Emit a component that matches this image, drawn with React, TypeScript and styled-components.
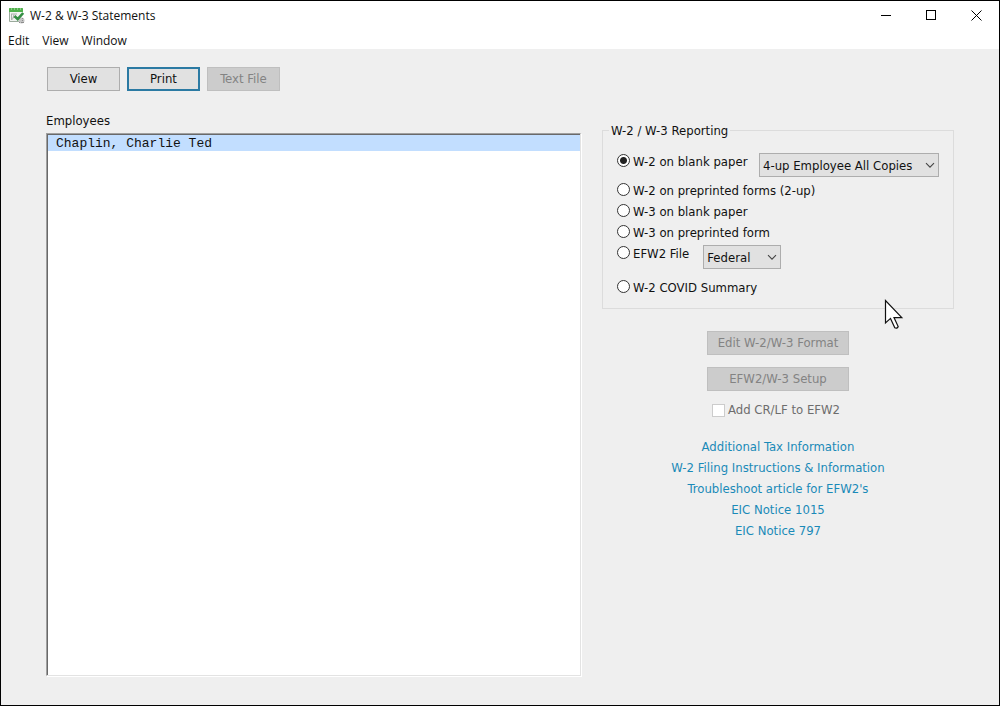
import React, { useState } from "react";
import styled, { createGlobalStyle } from "styled-components";

const uiFont = `Tahoma, "DejaVu Sans Condensed", "Noto Sans", sans-serif`;
const titleFont = `"Segoe UI", "Open Sans", "Noto Sans", sans-serif`;
const monoFont = `"Liberation Mono", "Courier New", monospace`;

const GlobalStyle = createGlobalStyle`
  *, *::before, *::after { box-sizing: border-box; }
  body { margin: 0; background: #efefef; color: #111; font: 13px/16px ${uiFont}; }
  button, select, input { font: inherit; color: inherit; margin: 0; }
`;

const Window = styled.div`
  position: relative;
  display: flex;
  flex-direction: column;
  min-height: 100vh;
  border: 1px solid #000;
  background: #efefef;
`;

const TitleBar = styled.header`
  display: flex;
  align-items: center;
  height: 29px;
  padding-left: 8px;
  background: #fff;
  font: 12px/16px ${titleFont};
`;

const Title = styled.h1`
  flex: 1;
  margin: 0 0 0 5px;
  font: inherit;
`;

const CaptionButton = styled.button`
  display: grid;
  place-items: center;
  width: 45px;
  height: 29px;
  padding: 0;
  border: 0;
  background: transparent;
`;

const MenuBar = styled.nav`
  display: flex;
  gap: 13px;
  height: 19px;
  padding-left: 7px;
  background: #fff;
`;

const MenuButton = styled.button`
  height: 19px;
  padding: 2px 0 0;
  border: 0;
  background: transparent;
  font: 12px/17px ${titleFont};
`;

const Content = styled.main`
  flex: 1;
  display: flex;
  flex-direction: column;
  padding: 18px 45px 29px;
`;

const Toolbar = styled.div`
  display: flex;
  gap: 7px;
  padding-left: 1px;
`;

const PushButton = styled.button<{ $primary?: boolean; $wide?: boolean }>`
  width: ${(p) => (p.$wide ? 142 : 73)}px;
  height: 24px;
  padding: 0;
  border: ${(p) => (p.$primary ? "2px solid #2b7aa3" : "1px solid #adadad")};
  background: #e1e1e1;
  &:disabled {
    border-color: #bfbfbf;
    background: #cccccc;
    color: #838383;
  }
`;

const Columns = styled.div`
  flex: 1;
  display: grid;
  grid-template-columns: minmax(0, 535fr) minmax(352px, 352fr);
  gap: 21px;
  margin-top: 22px;
`;

const ListPanel = styled.section`
  display: flex;
  flex-direction: column;
`;

const ListLabel = styled.h2`
  margin: 0 0 4px;
  font: inherit;
`;

const ListBox = styled.ul`
  flex: 1;
  margin: 0;
  padding: 1px 0 0 1px;
  list-style: none;
  border: 1px solid;
  border-color: #a0a0a0 #e3e3e3 #e3e3e3 #a0a0a0;
  box-shadow: inset 1px 1px 0 #696969, 1px 1px 0 #fff;
  background: #fff;
`;

const ListItem = styled.li`
  padding: 1px 0 0 8px;
  background: #c2deff;
  font: 13px/15px ${monoFont};
`;

const SidePanel = styled.section`
  display: flex;
  flex-direction: column;
  align-items: center;
  padding-top: 8px;
`;

const Group = styled.fieldset`
  align-self: stretch;
  min-width: 0;
  margin: 0;
  padding: 11px 14px 11px 14px;
  border: 1px solid #dcdcdc;
`;

const Legend = styled.legend`
  margin-left: -8px;
  padding: 2px 2px 0;
`;

const OptionRow = styled.div<{ $height?: number; $spread?: boolean }>`
  display: flex;
  align-items: flex-start;
  justify-content: ${(p) => (p.$spread ? "space-between" : "flex-start")};
  gap: ${(p) => (p.$spread ? 0 : 14)}px;
  height: ${(p) => p.$height ?? 21}px;
`;

const OptionLabel = styled.label`
  display: flex;
  align-items: center;
  gap: 3px;
  height: 21px;
  padding-top: 2px;
  white-space: nowrap;
`;

const Radio = styled.input.attrs({ type: "radio" })`
  appearance: none;
  width: 13px;
  height: 13px;
  border: 1px solid #333;
  border-radius: 50%;
  background: #fff;
  && {
    margin-bottom: 2px;
  }
  &:checked {
    background: radial-gradient(circle, #222 3px, #fff 4px);
  }
`;

const SelectWrap = styled.span<{ $width: number }>`
  position: relative;
  flex: none;
  width: ${(p) => p.$width}px;
  margin-top: 3px;
`;

const Select = styled.select`
  appearance: none;
  display: block;
  width: 100%;
  height: 24px;
  padding: 1px 20px 0 3px;
  border: 1px solid #adadad;
  border-radius: 0;
  background: #e1e1e1;
`;

const Chevron = styled.svg`
  position: absolute;
  right: 4px;
  top: 9px;
  pointer-events: none;
`;

const Actions = styled.div`
  display: flex;
  flex-direction: column;
  align-items: center;
  gap: 12px;
  margin-top: 22px;
`;

const CheckLabel = styled.label`
  display: flex;
  align-items: center;
  gap: 3px;
  height: 14px;
  margin-right: 4px;
  color: #6d6d6d;
`;

const CheckBox = styled.input.attrs({ type: "checkbox" })`
  appearance: none;
  width: 13px;
  height: 13px;
  border: 1px solid #cccccc;
  background: #fff;
`;

const Links = styled.nav`
  display: flex;
  flex-direction: column;
  align-items: center;
  margin-top: 19px;
`;

const Link = styled.a`
  color: #1a8ab8;
  line-height: 21px;
  text-decoration: none;
`;

const Pointer = styled.svg`
  position: absolute;
  left: 883px;
  top: 298px;
  pointer-events: none;
`;

const AppIcon = () => (
  <svg width="16" height="16" viewBox="0 0 16 16" aria-hidden="true">
    <path d="M0.500 3v10.500h11.500" fill="#f4f4f4" stroke="#9aaa9c" />
    <path d="M1 3h12v10h-12z" fill="#f1f3f1" />
    <rect x="0" y="0" width="14" height="4" rx="0.500" fill="#4fb04b" />
    <path d="M2 1h1M5 1h1M8 1h1M11 1h1" stroke="#c5e6c3" />
    <path d="M2 6h6M2.500 6v6M5 6.500l-1.500 5M4 9.500h2" stroke="#a9b0aa" fill="none" />
    <circle cx="12.500" cy="12.500" r="3" fill="#c3c3c3" />
    <path d="M10 14.500h5M13.500 10v6" stroke="#8d8d8d" strokeDasharray="1 1" />
    <path d="M5.500 8l3.200 3.200L14.200 5" stroke="#348e43" strokeWidth="2.600" fill="none" />
  </svg>
);

interface DropDownProps {
  label: string;
  width: number;
  options: string[];
}

const DropDown = ({ label, width, options }: DropDownProps) => (
  <SelectWrap $width={width}>
    <Select aria-label={label}>
      {options.map((o) => (
        <option key={o}>{o}</option>
      ))}
    </Select>
    <Chevron width="10" height="7" viewBox="0 0 10 7" aria-hidden="true">
      <path d="M1 1.2l4 4 4-4" fill="none" stroke="#444" strokeWidth="1.1" />
    </Chevron>
  </SelectWrap>
);

const links = [
  "Additional Tax Information",
  "W-2 Filing Instructions & Information",
  "Troubleshoot article for EFW2's",
  "EIC Notice 1015",
  "EIC Notice 797",
];

export default function App() {
  const [form, setForm] = useState("W-2 on blank paper");

  const option = (name: string) => (
    <OptionLabel>
      <Radio name="form" checked={form === name} onChange={() => setForm(name)} />
      {name}
    </OptionLabel>
  );

  return (
    <Window>
      <GlobalStyle />
      <TitleBar>
        <AppIcon />
        <Title>W-2 &amp; W-3 Statements</Title>
        <CaptionButton aria-label="Minimize">
          <svg width="11" height="11"><path d="M0 5.5h10" stroke="#000" /></svg>
        </CaptionButton>
        <CaptionButton aria-label="Maximize">
          <svg width="11" height="11"><rect x="0.5" y="0.5" width="9" height="9" fill="none" stroke="#000" /></svg>
        </CaptionButton>
        <CaptionButton aria-label="Close">
          <svg width="11" height="11"><path d="M0.5 0.5l10 10M10.5 0.5l-10 10" stroke="#000" /></svg>
        </CaptionButton>
      </TitleBar>
      <MenuBar>
        <MenuButton>Edit</MenuButton>
        <MenuButton>View</MenuButton>
        <MenuButton>Window</MenuButton>
      </MenuBar>
      <Content>
        <Toolbar>
          <PushButton>View</PushButton>
          <PushButton $primary>Print</PushButton>
          <PushButton disabled>Text File</PushButton>
        </Toolbar>
        <Columns>
          <ListPanel>
            <ListLabel id="employees">Employees</ListLabel>
            <ListBox role="listbox" aria-labelledby="employees" tabIndex={0}>
              <ListItem role="option" aria-selected="true">Chaplin, Charlie Ted</ListItem>
            </ListBox>
          </ListPanel>
          <SidePanel>
            <Group>
              <Legend>W-2 / W-3 Reporting</Legend>
              <OptionRow $height={29} $spread>
                {option("W-2 on blank paper")}
                <DropDown label="W-2 layout" width={180} options={["4-up Employee All Copies"]} />
              </OptionRow>
              <OptionRow>{option("W-2 on preprinted forms (2-up)")}</OptionRow>
              <OptionRow>{option("W-3 on blank paper")}</OptionRow>
              <OptionRow>{option("W-3 on preprinted form")}</OptionRow>
              <OptionRow $height={34}>
                {option("EFW2 File")}
                <DropDown label="EFW2 agency" width={78} options={["Federal"]} />
              </OptionRow>
              <OptionRow>{option("W-2 COVID Summary")}</OptionRow>
            </Group>
            <Actions>
              <PushButton $wide disabled>Edit W-2/W-3 Format</PushButton>
              <PushButton $wide disabled>EFW2/W-3 Setup</PushButton>
              <CheckLabel>
                <CheckBox disabled />
                Add CR/LF to EFW2
              </CheckLabel>
            </Actions>
            <Links>
              {links.map((text) => (
                <Link key={text} href="#">{text}</Link>
              ))}
            </Links>
          </SidePanel>
        </Columns>
      </Content>
      <Pointer width="20" height="32" viewBox="0 0 20 32" aria-hidden="true">
        <path
          d="M1.500 1.500v22.500l5-4.600 4.300 9.400q2 1.200 3.400-1.200l-4.200-9h7.800z"
          fill="#fff"
          stroke="#111"
          strokeWidth="1.200"
        />
      </Pointer>
    </Window>
  );
}
